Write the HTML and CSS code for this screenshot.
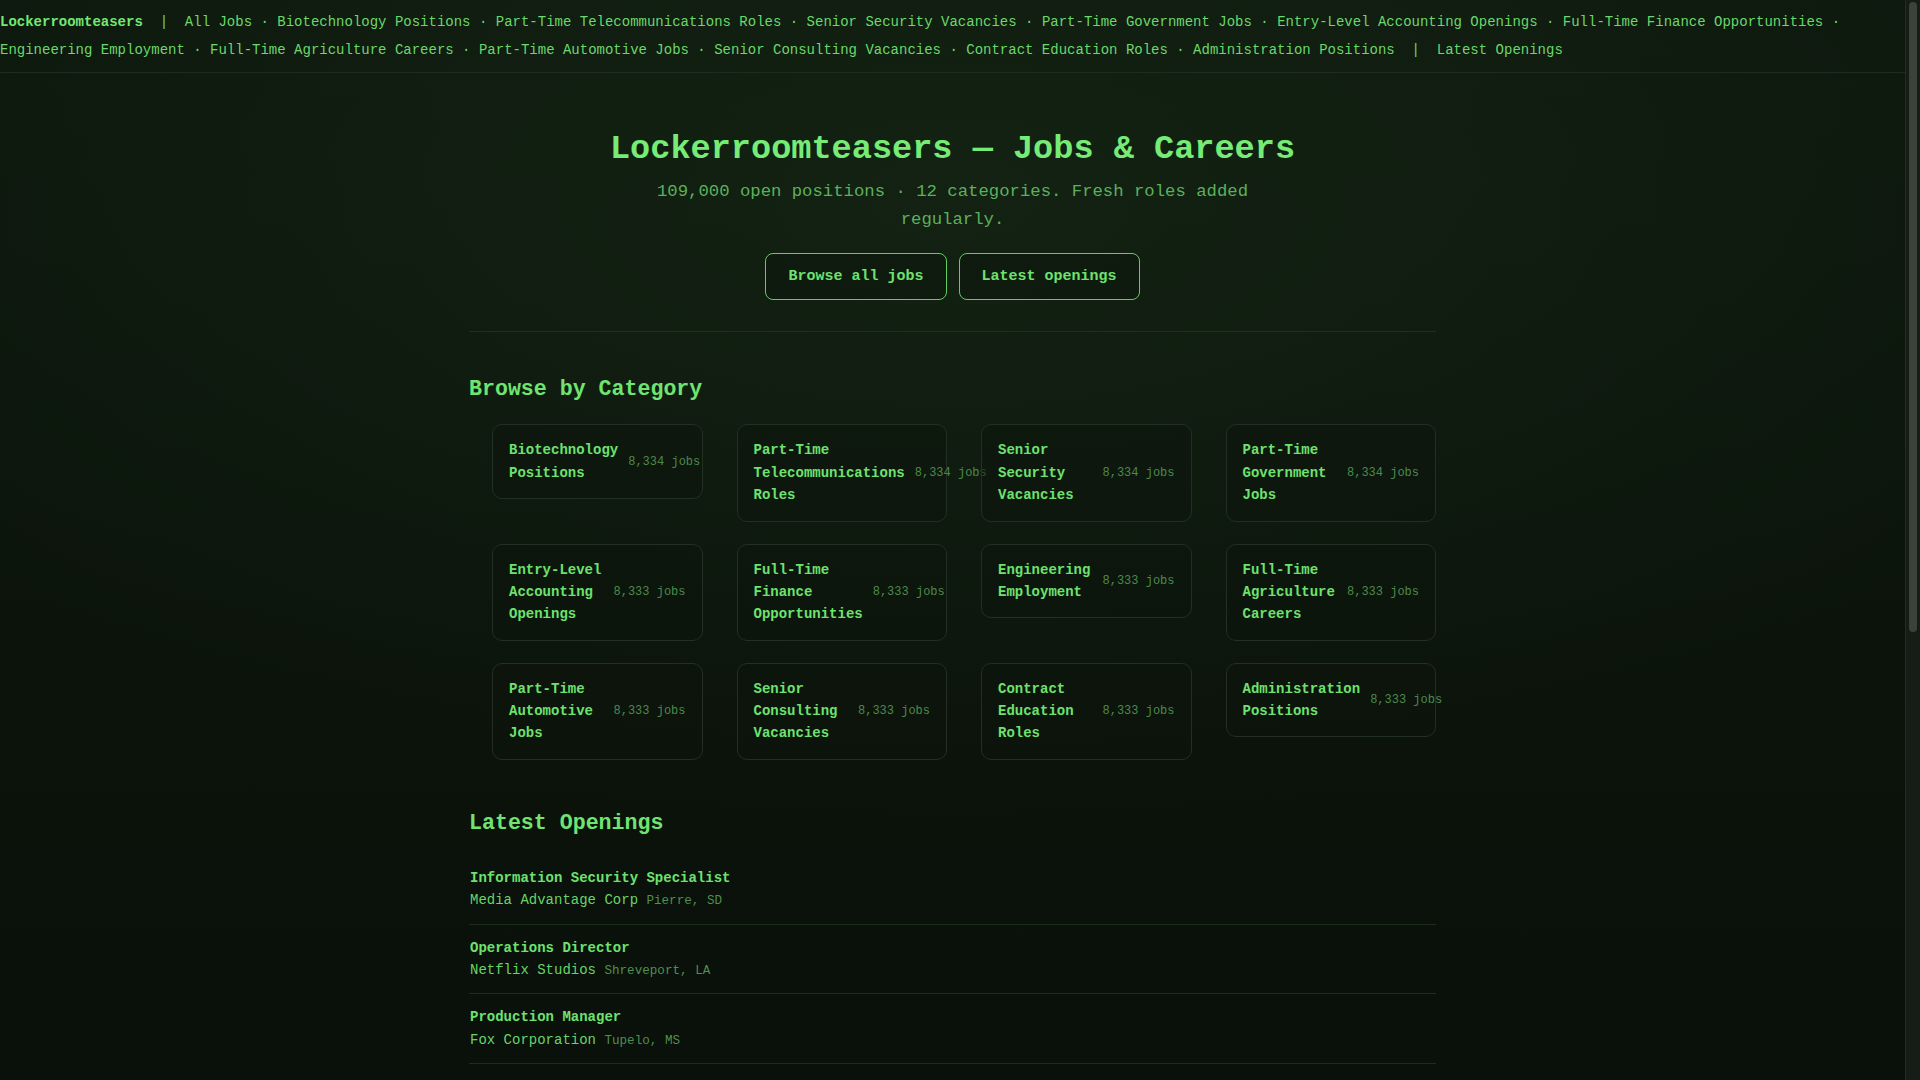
FILE: index.html
```html
<!DOCTYPE html>
<html lang="en">
<head>
<meta charset="utf-8">
<title>Lockerroomteasers — Jobs &amp; Careers</title>
<link rel="stylesheet" href="styles.css">
</head>
<body>
<nav class="topnav">
  <a class="brand" href="#">Lockerroomteasers</a><span class="pipe">  |  </span><a href="#">All Jobs</a> · <a href="#">Biotechnology Positions</a> · <a href="#">Part-Time Telecommunications Roles</a> · <a href="#">Senior Security Vacancies</a> · <a href="#">Part-Time Government Jobs</a> · <a href="#">Entry-Level Accounting Openings</a> · <a href="#">Full-Time Finance Opportunities</a> · <a href="#">Engineering Employment</a> · <a href="#">Full-Time Agriculture Careers</a> · <a href="#">Part-Time Automotive Jobs</a> · <a href="#">Senior Consulting Vacancies</a> · <a href="#">Contract Education Roles</a> · <a href="#">Administration Positions</a><span class="pipe">  |  </span><a href="#">Latest Openings</a>
</nav>

<main class="container">
  <header class="hero">
    <h1 class="hero-title">Lockerroomteasers — Jobs &amp; Careers</h1>
    <p class="hero-sub">109,000 open positions · 12 categories. Fresh roles added regularly.</p>
    <div class="hero-actions">
      <a class="btn" href="#">Browse all jobs</a>
      <a class="btn" href="#">Latest openings</a>
    </div>
  </header>

  <hr class="rule">

  <section class="section">
    <h2 class="section-title">Browse by Category</h2>
    <div class="cat-grid">
      <a class="cat" href="#"><span class="cat-name">Biotechnology Positions</span><span class="cat-count">8,334 jobs</span></a>
      <a class="cat" href="#"><span class="cat-name">Part-Time Telecommunications Roles</span><span class="cat-count">8,334 jobs</span></a>
      <a class="cat" href="#"><span class="cat-name">Senior Security Vacancies</span><span class="cat-count">8,334 jobs</span></a>
      <a class="cat" href="#"><span class="cat-name">Part-Time Government Jobs</span><span class="cat-count">8,334 jobs</span></a>
      <a class="cat" href="#"><span class="cat-name">Entry-Level Accounting Openings</span><span class="cat-count">8,333 jobs</span></a>
      <a class="cat" href="#"><span class="cat-name">Full-Time Finance Opportunities</span><span class="cat-count">8,333 jobs</span></a>
      <a class="cat" href="#"><span class="cat-name">Engineering Employment</span><span class="cat-count">8,333 jobs</span></a>
      <a class="cat" href="#"><span class="cat-name">Full-Time Agriculture Careers</span><span class="cat-count">8,333 jobs</span></a>
      <a class="cat" href="#"><span class="cat-name">Part-Time Automotive Jobs</span><span class="cat-count">8,333 jobs</span></a>
      <a class="cat" href="#"><span class="cat-name">Senior Consulting Vacancies</span><span class="cat-count">8,333 jobs</span></a>
      <a class="cat" href="#"><span class="cat-name">Contract Education Roles</span><span class="cat-count">8,333 jobs</span></a>
      <a class="cat" href="#"><span class="cat-name">Administration Positions</span><span class="cat-count">8,333 jobs</span></a>
    </div>
  </section>

  <section class="section latest">
    <h2 class="section-title">Latest Openings</h2>
    <ul class="jobs">
      <li class="job"><a class="job-title" href="#">Information Security Specialist</a><div class="job-meta"><span class="job-co">Media Advantage Corp</span> <span class="job-loc">Pierre, SD</span></div></li>
      <li class="job"><a class="job-title" href="#">Operations Director</a><div class="job-meta"><span class="job-co">Netflix Studios</span> <span class="job-loc">Shreveport, LA</span></div></li>
      <li class="job"><a class="job-title" href="#">Production Manager</a><div class="job-meta"><span class="job-co">Fox Corporation</span> <span class="job-loc">Tupelo, MS</span></div></li>
    </ul>
  </section>
</main>

<div class="fake-scrollbar" aria-hidden="true"><div class="fake-thumb"></div></div>
</body>
</html>
```

FILE: styles.css
```css
html {
  background: #0c140c;
}

body {
  margin: 0 15px 0 0;
  min-height: 100vh;
  padding-bottom: 40px;
  font-family: "Liberation Mono", "DejaVu Sans Mono", monospace;
  color: #6ee26e;
  background:
    radial-gradient(ellipse 70% 55% at 50% 18%, rgba(24, 44, 24, 0.55) 0%, rgba(14, 24, 14, 0) 100%),
    linear-gradient(180deg, #0d170d 0%, #0b130b 60%, #0a100a 100%);
}

a {
  color: inherit;
  text-decoration: none;
}

/* Top navigation */
.topnav {
  padding: 8px 0;
  font-size: 14px;
  line-height: 28px;
  color: #6ad86a;
  border-bottom: 1px solid #1e2b1e;
}

.brand {
  font-weight: bold;
  color: #74e874;
}

.pipe {
  white-space: pre;
}

/* Main container */
.container {
  width: 967px;
  margin: 0 auto;
}

.hero {
  padding-top: 57px;
  text-align: center;
}

.hero-title {
  margin: 0;
  font-size: 33.6px;
  line-height: normal;
  font-weight: bold;
  color: #76ec76;
}

.hero-sub {
  max-width: 620px;
  margin: 10px auto 0;
  font-size: 17.3px;
  line-height: 1.6;
  color: #5cb05c;
}

.hero-actions {
  display: flex;
  justify-content: center;
  gap: 12px;
  margin-top: 20px;
}

.btn {
  display: inline-block;
  padding: 14px 22px;
  font-size: 15px;
  line-height: normal;
  font-weight: bold;
  color: #6ee26e;
  border: 1px solid #5fce5f;
  border-radius: 8px;
  background: rgba(8, 16, 8, 0.35);
}

.rule {
  margin: 31px 0 0;
  border: 0;
  border-top: 1px solid #1f301f;
  height: 0;
}

.section-title {
  margin: 0;
  font-size: 21.6px;
  line-height: normal;
  font-weight: bold;
  color: #70e470;
}

.section {
  padding-top: 45px;
}

/* Category grid */
.cat-grid {
  display: grid;
  grid-template-columns: repeat(4, 1fr);
  column-gap: 34px;
  row-gap: 22px;
  align-items: start;
  margin: 23px 0 0 23px;
}

.cat {
  display: flex;
  align-items: center;
  justify-content: space-between;
  gap: 10px;
  padding: 14px 16px;
  border: 1px solid #222f22;
  border-radius: 10px;
  background: rgba(12, 20, 12, 0.5);
  min-width: 0;
}

.cat-name {
  flex: 0 1 auto;
  font-size: 14px;
  line-height: 1.6;
  font-weight: bold;
  color: #6ee26e;
}

.cat-count {
  flex: 0 0 auto;
  font-size: 12px;
  color: #4c8a4c;
  white-space: nowrap;
}

/* Latest openings */
.latest {
  padding-top: 51px;
}

.jobs {
  list-style: none;
  margin: 20px 0 0;
  padding: 0;
}

.job {
  padding: 12px 1px;
  border-bottom: 1px solid #1e2c1e;
  font-size: 14px;
  line-height: 1.6;
}

.job-title {
  display: block;
  font-weight: bold;
  color: #6ee26e;
}

.job-co {
  color: #68d468;
}

.job-loc {
  font-size: 12.6px;
  color: #4f8f4f;
}

/* Browser-style scrollbar drawn over the right edge */
.fake-scrollbar {
  position: fixed;
  top: 0;
  right: 0;
  width: 15px;
  height: 100vh;
  background: #161c16;
  border-left: 1px solid #232b23;
  box-sizing: border-box;
}

.fake-thumb {
  margin: 2px 3px 0 3px;
  height: 630px;
  border-radius: 5px;
  background: #3a423a;
}
```
